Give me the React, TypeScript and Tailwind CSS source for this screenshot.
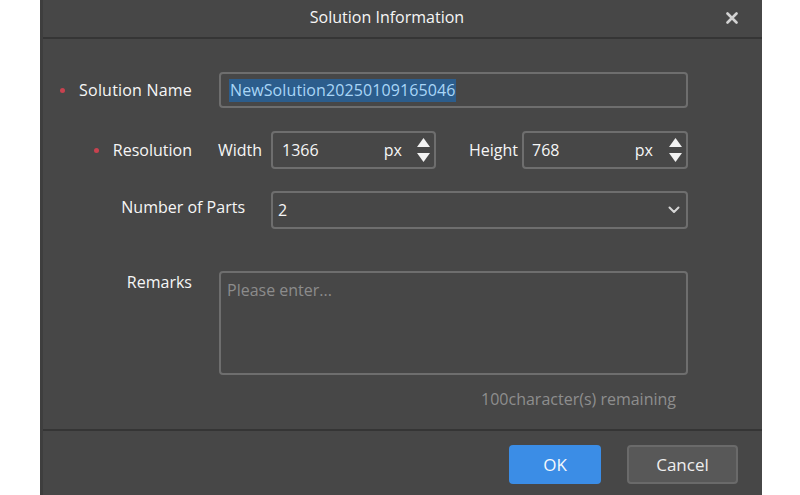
import React from "react";

const font = { fontFamily: '"Open Sans", "Noto Sans", sans-serif' };

function Spinner() {
  return (
    <div className="flex flex-col items-center justify-center gap-[6px] w-[18px]">
      <svg width="13" height="9" viewBox="0 0 13 9">
        <polygon points="6.5,0 13,9 0,9" fill="#f2f2f2" />
      </svg>
      <svg width="13" height="9" viewBox="0 0 13 9">
        <polygon points="0,0 13,0 6.5,9" fill="#f2f2f2" />
      </svg>
    </div>
  );
}

function Dot() {
  return <span className="inline-block w-[5px] h-[5px] rounded-full bg-[#c8424f] mr-[14px]" />;
}

export default function App() {
  return (
    <div className="w-[800px] h-[495px] bg-white flex" style={font}>
      <div className="ml-[40px] w-[722px] h-full bg-[#474747] border-l-[3px] border-[#3e3e3e] flex flex-col text-[#f6f6f6]">
        {/* header */}
        <div className="h-[39px] border-b-[2px] border-[#353535] relative flex items-center justify-center shrink-0">
          <span className="text-[16px] text-[#f6f6f6] -mt-[3px] ml-[-31px]">Solution Information</span>
          <svg className="absolute right-[24px] top-[12px]" width="12" height="12" viewBox="0 0 12 12">
            <path d="M1.5 1.5 L10.5 10.5 M10.5 1.5 L1.5 10.5" stroke="#d2d2d2" strokeWidth="2.6" strokeLinecap="round" />
          </svg>
        </div>

        {/* body */}
        <div className="flex-1 flex flex-col">
          {/* row 1 */}
          <div className="flex items-center mt-[33px] h-[36px]">
            <div className="w-[149px] flex items-center justify-end text-[16px]">
              <Dot />
              <span className="tracking-[0.2px]">Solution Name</span>
            </div>
            <div className="ml-[27px] w-[469px] h-[36px] border-[2px] border-[#6e6e6e] rounded-[4px] flex items-center pl-[8px]">
              <span className="bg-[#2c5d8c] text-[#a9d6f7] text-[16px] leading-[23px] px-[1px] tracking-[0.1px]">NewSolution20250109165046</span>
            </div>
          </div>

          {/* row 2 */}
          <div className="flex items-center mt-[23px] h-[38px]">
            <div className="w-[149px] flex items-center justify-end text-[16px]">
              <Dot />
              <span>Resolution</span>
            </div>
            <span className="ml-[26px] text-[16px] w-[48px]">Width</span>
            <div className="ml-[5px] w-[165px] h-[38px] border-[2px] border-[#6e6e6e] rounded-[4px] flex items-center pl-[9px] pr-[2px]">
              <span className="text-[16px] flex-1">1366</span>
              <span className="text-[16px] mr-[12px]">px</span>
              <Spinner />
            </div>
            <span className="ml-[33px] text-[16px] w-[52px]">Height</span>
            <div className="ml-[1px] w-[166px] h-[38px] border-[2px] border-[#6e6e6e] rounded-[4px] flex items-center pl-[8px] pr-[2px]">
              <span className="text-[16px] flex-1">768</span>
              <span className="text-[16px] mr-[13px]">px</span>
              <Spinner />
            </div>
          </div>

          {/* row 3 */}
          <div className="flex items-center mt-[22px] h-[38px]">
            <div className="w-[202px] flex justify-end text-[16px] -mt-[6px]">
              <span>Number of Parts</span>
            </div>
            <div className="ml-[26px] w-[417px] h-[38px] border-[2px] border-[#6e6e6e] rounded-[4px] flex items-center pl-[5px] pr-[6px]">
              <span className="text-[16px] flex-1">2</span>
              <svg width="12" height="8" viewBox="0 0 12 8">
                <path d="M1.5 1.5 L6 6 L10.5 1.5" stroke="#d6d6d6" strokeWidth="2" fill="none" strokeLinecap="round" strokeLinejoin="round" />
              </svg>
            </div>
          </div>

          {/* row 4 */}
          <div className="flex items-start mt-[42px]">
            <div className="w-[149px] flex justify-end text-[16px] -mt-[1px]">
              <span>Remarks</span>
            </div>
            <div className="ml-[27px] w-[469px] h-[104px] border-[2px] border-[#6e6e6e] rounded-[4px] px-[6px] pt-[5px]">
              <span className="text-[16px] text-[#8c8c8c]">Please enter...</span>
            </div>
          </div>

          <div className="flex justify-end pr-[86px] mt-[12px]">
            <span className="text-[16px] text-[#8e8e8e]">100character(s) remaining</span>
          </div>
        </div>

        {/* footer */}
        <div className="h-[66px] border-t-[2px] border-[#353535] flex items-start justify-end gap-[26px] pr-[24px] pt-[14px] shrink-0">
          <button className="w-[92px] h-[39px] rounded-[4px] bg-[#3b8de6] text-[17px] text-[#f4f8fc]">OK</button>
          <button className="w-[111px] h-[39px] rounded-[4px] bg-[#585858] border-[2px] border-[#6a6a6a] text-[17px] text-[#eeeeee]">Cancel</button>
        </div>
      </div>
    </div>
  );
}
